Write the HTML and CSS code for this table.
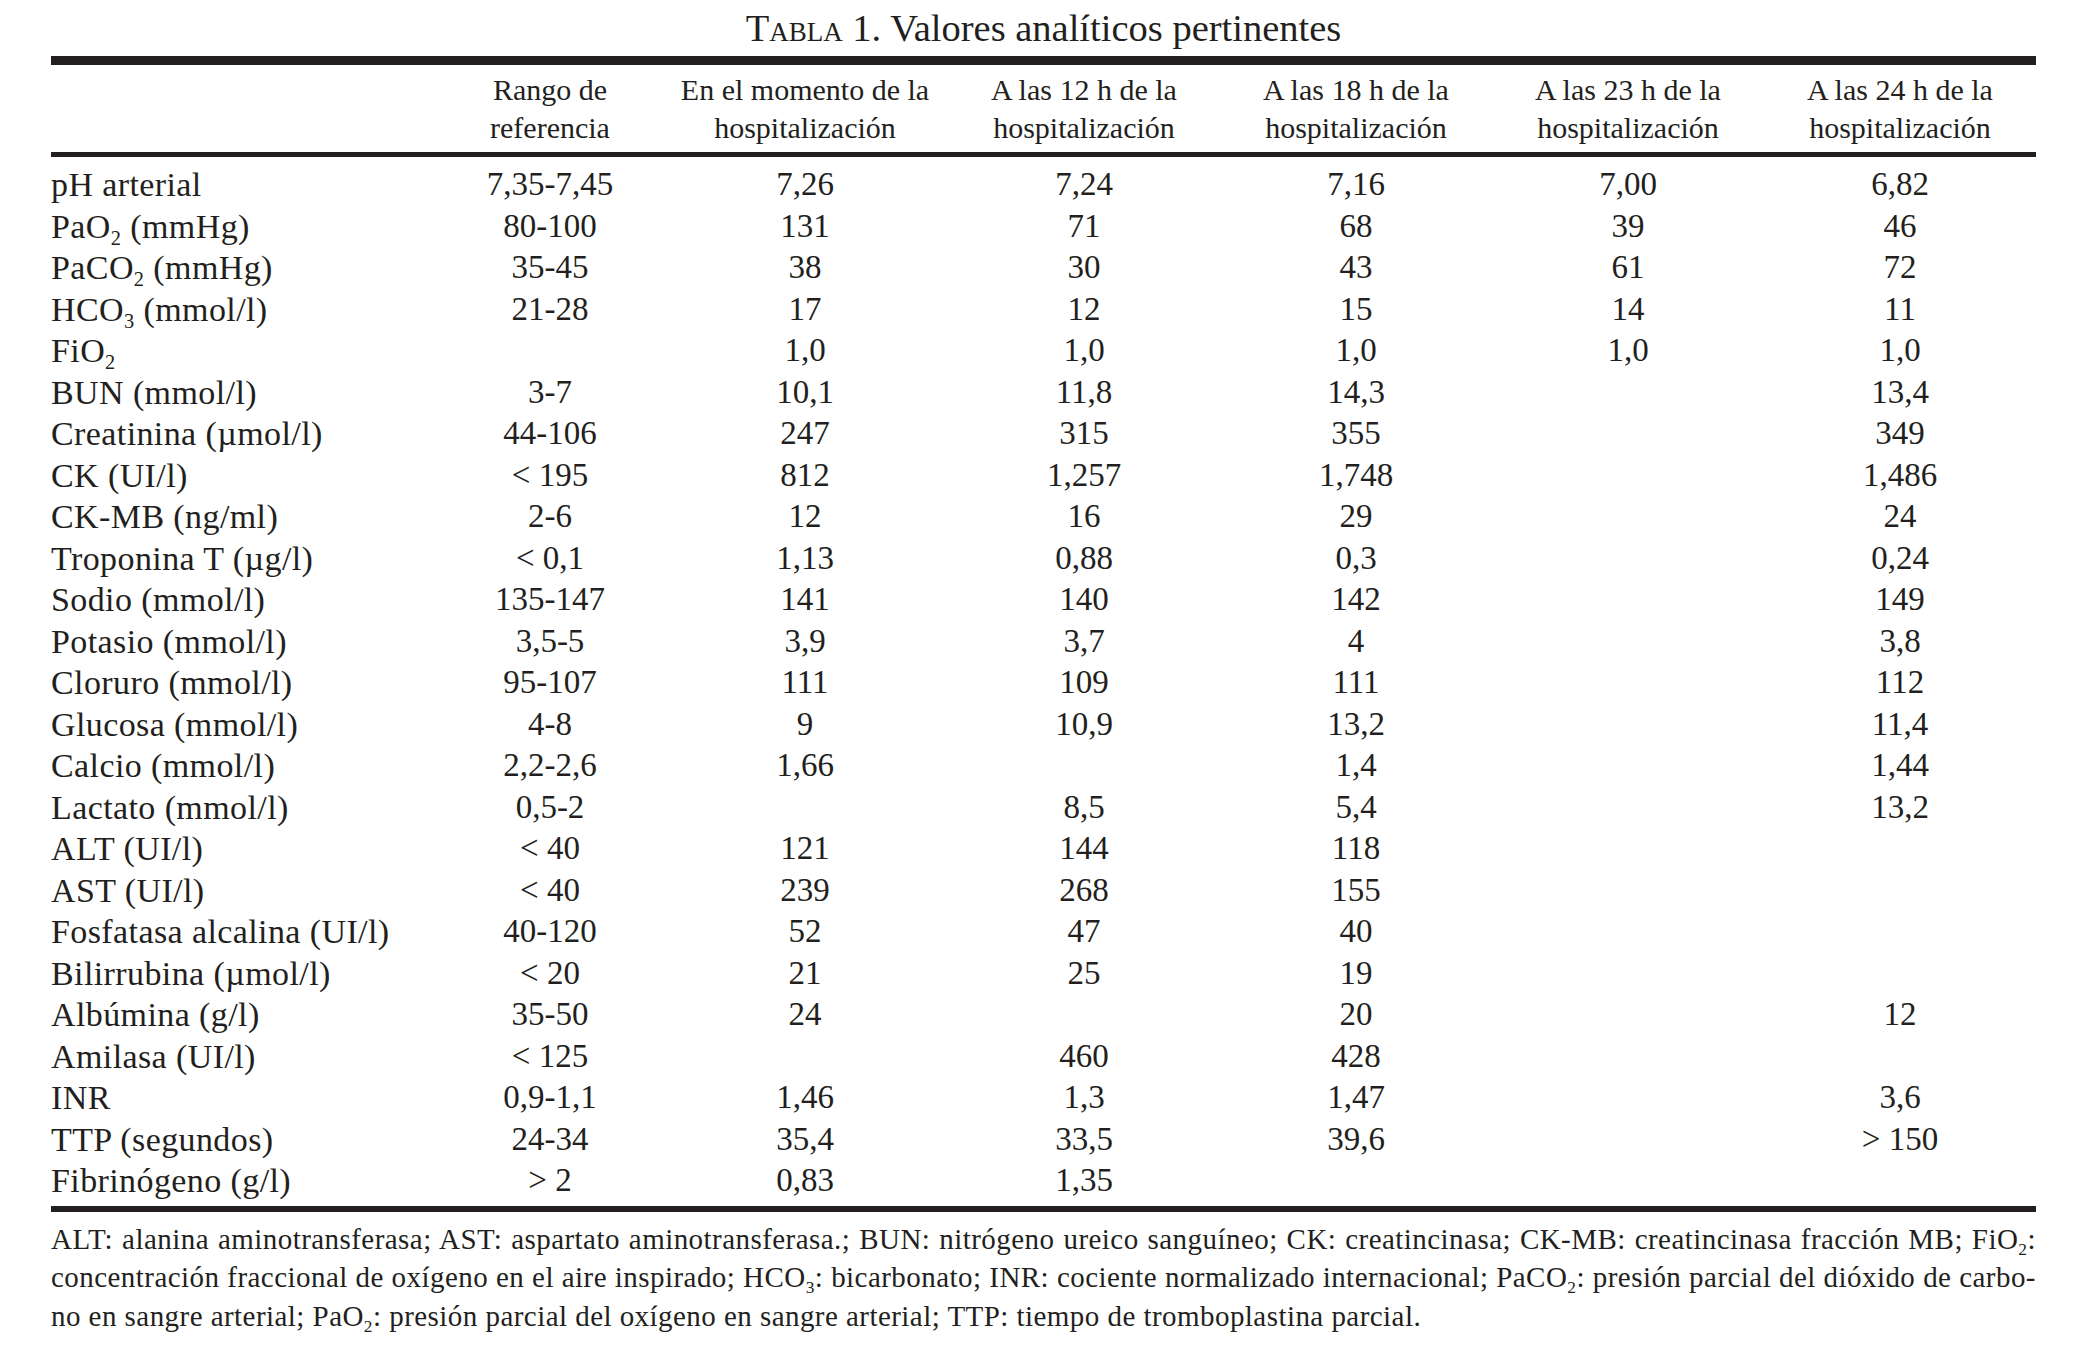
FILE: index.html
```html
<!DOCTYPE html>
<html lang="es">
<head>
<meta charset="utf-8">
<title>Tabla 1. Valores analíticos pertinentes</title>
<link rel="stylesheet" href="styles.css">
</head>
<body>
<div class="doc">
  <div class="title"><span class="sc">Tabla</span> 1. Valores analíticos pertinentes</div>
  <table class="tbl">
    <colgroup>
      <col class="c-label"><col class="c-range"><col class="c-adm"><col class="c-t"><col class="c-t"><col class="c-t"><col class="c-t">
    </colgroup>
    <thead>
      <tr>
        <th></th>
        <th>Rango de<br>referencia</th>
        <th>En el momento de la<br>hospitalización</th>
        <th>A las 12 h de la<br>hospitalización</th>
        <th>A las 18 h de la<br>hospitalización</th>
        <th>A las 23 h de la<br>hospitalización</th>
        <th>A las 24 h de la<br>hospitalización</th>
      </tr>
    </thead>
    <tbody>
      <tr><td>pH arterial</td><td>7,35-7,45</td><td>7,26</td><td>7,24</td><td>7,16</td><td>7,00</td><td>6,82</td></tr>
      <tr><td>PaO<sub>2</sub> (mmHg)</td><td>80-100</td><td>131</td><td>71</td><td>68</td><td>39</td><td>46</td></tr>
      <tr><td>PaCO<sub>2</sub> (mmHg)</td><td>35-45</td><td>38</td><td>30</td><td>43</td><td>61</td><td>72</td></tr>
      <tr><td>HCO<sub>3</sub> (mmol/l)</td><td>21-28</td><td>17</td><td>12</td><td>15</td><td>14</td><td>11</td></tr>
      <tr><td>FiO<sub>2</sub></td><td></td><td>1,0</td><td>1,0</td><td>1,0</td><td>1,0</td><td>1,0</td></tr>
      <tr><td>BUN (mmol/l)</td><td>3-7</td><td>10,1</td><td>11,8</td><td>14,3</td><td></td><td>13,4</td></tr>
      <tr><td>Creatinina (µmol/l)</td><td>44-106</td><td>247</td><td>315</td><td>355</td><td></td><td>349</td></tr>
      <tr><td>CK (UI/l)</td><td>&lt; 195</td><td>812</td><td>1,257</td><td>1,748</td><td></td><td>1,486</td></tr>
      <tr><td>CK-MB (ng/ml)</td><td>2-6</td><td>12</td><td>16</td><td>29</td><td></td><td>24</td></tr>
      <tr><td>Troponina T (µg/l)</td><td>&lt; 0,1</td><td>1,13</td><td>0,88</td><td>0,3</td><td></td><td>0,24</td></tr>
      <tr><td>Sodio (mmol/l)</td><td>135-147</td><td>141</td><td>140</td><td>142</td><td></td><td>149</td></tr>
      <tr><td>Potasio (mmol/l)</td><td>3,5-5</td><td>3,9</td><td>3,7</td><td>4</td><td></td><td>3,8</td></tr>
      <tr><td>Cloruro (mmol/l)</td><td>95-107</td><td>111</td><td>109</td><td>111</td><td></td><td>112</td></tr>
      <tr><td>Glucosa (mmol/l)</td><td>4-8</td><td>9</td><td>10,9</td><td>13,2</td><td></td><td>11,4</td></tr>
      <tr><td>Calcio (mmol/l)</td><td>2,2-2,6</td><td>1,66</td><td></td><td>1,4</td><td></td><td>1,44</td></tr>
      <tr><td>Lactato (mmol/l)</td><td>0,5-2</td><td></td><td>8,5</td><td>5,4</td><td></td><td>13,2</td></tr>
      <tr><td>ALT (UI/l)</td><td>&lt; 40</td><td>121</td><td>144</td><td>118</td><td></td><td></td></tr>
      <tr><td>AST (UI/l)</td><td>&lt; 40</td><td>239</td><td>268</td><td>155</td><td></td><td></td></tr>
      <tr><td>Fosfatasa alcalina (UI/l)</td><td>40-120</td><td>52</td><td>47</td><td>40</td><td></td><td></td></tr>
      <tr><td>Bilirrubina (µmol/l)</td><td>&lt; 20</td><td>21</td><td>25</td><td>19</td><td></td><td></td></tr>
      <tr><td>Albúmina (g/l)</td><td>35-50</td><td>24</td><td></td><td>20</td><td></td><td>12</td></tr>
      <tr><td>Amilasa (UI/l)</td><td>&lt; 125</td><td></td><td>460</td><td>428</td><td></td><td></td></tr>
      <tr><td>INR</td><td>0,9-1,1</td><td>1,46</td><td>1,3</td><td>1,47</td><td></td><td>3,6</td></tr>
      <tr><td>TTP (segundos)</td><td>24-34</td><td>35,4</td><td>33,5</td><td>39,6</td><td></td><td>&gt; 150</td></tr>
      <tr><td>Fibrinógeno (g/l)</td><td>&gt; 2</td><td>0,83</td><td>1,35</td><td></td><td></td><td></td></tr>
    </tbody>
  </table>
  <div class="notes">
    <div class="line just">ALT: alanina aminotransferasa; AST: aspartato aminotransferasa.; BUN: nitrógeno ureico sanguíneo; CK: creatincinasa; CK-MB: creatincinasa fracción MB; FiO<sub>2</sub>:</div>
    <div class="line just">concentración fraccional de oxígeno en el aire inspirado; HCO<sub>3</sub>: bicarbonato; INR: cociente normalizado internacional; PaCO<sub>2</sub>: presión parcial del dióxido de carbo-</div>
    <div class="line">no en sangre arterial; PaO<sub>2</sub>: presión parcial del oxígeno en sangre arterial; TTP: tiempo de tromboplastina parcial.</div>
  </div>
</div>
</body>
</html>
```

FILE: styles.css
```css
html, body {
  margin: 0;
  padding: 0;
  background: #ffffff;
}

body {
  font-family: "Liberation Serif", "Times New Roman", serif;
  color: #231f20;
}

.doc {
  width: 1985px;
  padding: 8px 0 0 51px;
}

.title {
  font-size: 38.5px;
  line-height: 40px;
  text-align: center;
  margin-bottom: 8px;
}

.sc {
  font-variant: small-caps;
}

.tbl {
  width: 1985px;
  border-collapse: collapse;
  table-layout: fixed;
  border-top: 9px solid #231f20;
  border-bottom: 6px solid #231f20;
}

.c-label { width: 387px; }
.c-range { width: 224px; }
.c-adm { width: 286px; }
.c-t { width: 272px; }

.tbl th {
  font-weight: normal;
  font-size: 30px;
  line-height: 38px;
  text-align: center;
  padding: 6px 0 5px 0;
  border-bottom: 5px solid #231f20;
}

.tbl td {
  font-size: 33px;
  line-height: 41.5px;
  height: 41.5px;
  padding: 0;
  text-align: center;
  white-space: nowrap;
}

.tbl td:first-child {
  text-align: left;
  font-size: 34px;
  letter-spacing: 0.4px;
}

.tbl tbody tr:first-child td {
  padding-top: 7px;
}

.tbl tbody tr:last-child td {
  padding-bottom: 4px;
}

sub {
  font-size: 0.6em;
  line-height: 0;
  vertical-align: -0.35em;
}

.notes {
  margin-top: 8px;
  font-size: 29px;
  line-height: 38.5px;
  letter-spacing: 0.45px;
}

.line {
  white-space: nowrap;
}

.line.just {
  white-space: normal;
  word-spacing: -6px;
  text-align: justify;
  text-align-last: justify;
}
```
